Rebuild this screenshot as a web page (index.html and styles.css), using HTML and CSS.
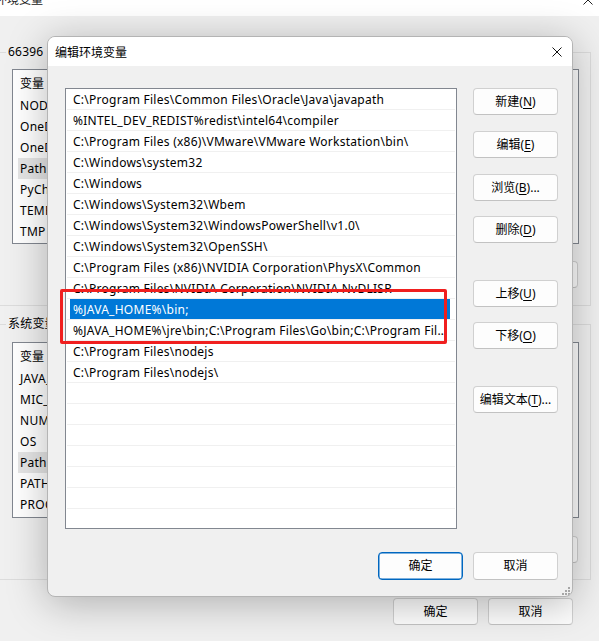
FILE: index.html
```html
<!DOCTYPE html>
<html lang="zh-CN">
<head>
<meta charset="utf-8">
<title>编辑环境变量</title>
<link rel="stylesheet" href="styles.css">
</head>
<body>
<div class="pwin">
  <div class="ptitle">
    <span class="ptext">环境变量</span>
    <svg class="pclose" width="10" height="10" viewBox="0 0 10 10"><path d="M0.5 0.5L9.5 9.5M9.5 0.5L0.5 9.5" stroke="#222" stroke-width="1" fill="none"/></svg>
  </div>
  <fieldset class="grp grp-user">
    <legend>66396 的用户变量(<u>U</u>)</legend>
    <div class="plist">
      <div class="phead"><span class="pc1">变量</span><span class="pc2">值</span></div>
      <div class="prow"><span class="pcell">NODE_PATH</span></div>
      <div class="prow"><span class="pcell">OneDrive</span></div>
      <div class="prow"><span class="pcell">OneDriveConsumer</span></div>
      <div class="prow sel"><span class="pcell">Path</span></div>
      <div class="prow"><span class="pcell">PyCharm</span></div>
      <div class="prow"><span class="pcell">TEMP</span></div>
      <div class="prow"><span class="pcell">TMP</span></div>
    </div>
    <div class="pbtns">
      <button class="btn">新建(<u>N</u>)...</button>
      <button class="btn">编辑(<u>E</u>)...</button>
      <button class="btn">删除(<u>D</u>)</button>
    </div>
  </fieldset>
  <fieldset class="grp grp-sys">
    <legend>系统变量(<u>S</u>)</legend>
    <div class="plist plist2">
      <div class="phead"><span class="pc1">变量</span><span class="pc2">值</span></div>
      <div class="prow"><span class="pcell">JAVA_HOME</span></div>
      <div class="prow"><span class="pcell">MIC_LD_LIBRARY_PATH</span></div>
      <div class="prow"><span class="pcell">NUMBER_OF_PROCESSORS</span></div>
      <div class="prow"><span class="pcell">OS</span></div>
      <div class="prow sel"><span class="pcell">Path</span></div>
      <div class="prow"><span class="pcell">PATHEXT</span></div>
      <div class="prow"><span class="pcell">PROCESSOR_ARCHITECTURE</span></div>
    </div>
    <div class="pbtns pbtns2">
      <button class="btn">新建(<u>W</u>)...</button>
      <button class="btn">编辑(<u>I</u>)...</button>
      <button class="btn">删除(<u>L</u>)</button>
    </div>
  </fieldset>
  <div class="pfoot">
    <button class="btn">确定</button>
    <button class="btn">取消</button>
  </div>
</div>

<div class="dialog">
  <div class="dtitle">
    <span>编辑环境变量</span>
    <svg width="10" height="10" viewBox="0 0 10 10"><path d="M0.5 0.5L9.5 9.5M9.5 0.5L0.5 9.5" stroke="#111" stroke-width="1" fill="none"/></svg>
  </div>
  <div class="dbody">
    <div class="dmain">
      <div class="dlist">
        <div class="drow"><span class="dcell">C:\Program Files\Common Files\Oracle\Java\javapath</span></div>
        <div class="drow"><span class="dcell">%INTEL_DEV_REDIST%redist\intel64\compiler</span></div>
        <div class="drow"><span class="dcell">C:\Program Files (x86)\VMware\VMware Workstation\bin\</span></div>
        <div class="drow"><span class="dcell">C:\Windows\system32</span></div>
        <div class="drow"><span class="dcell">C:\Windows</span></div>
        <div class="drow"><span class="dcell">C:\Windows\System32\Wbem</span></div>
        <div class="drow"><span class="dcell">C:\Windows\System32\WindowsPowerShell\v1.0\</span></div>
        <div class="drow"><span class="dcell">C:\Windows\System32\OpenSSH\</span></div>
        <div class="drow"><span class="dcell">C:\Program Files (x86)\NVIDIA Corporation\PhysX\Common</span></div>
        <div class="drow"><span class="dcell">C:\Program Files\NVIDIA Corporation\NVIDIA NvDLISR</span></div>
        <div class="drow sel"><span class="dcell">%JAVA_HOME%\bin;</span></div>
        <div class="drow"><span class="dcell">%JAVA_HOME%\jre\bin;C:\Program Files\Go\bin;C:\Program Files\Git\cmd</span></div>
        <div class="drow"><span class="dcell">C:\Program Files\nodejs</span></div>
        <div class="drow"><span class="dcell">C:\Program Files\nodejs\</span></div>
        <div class="drow"><span class="dcell"></span></div>
        <div class="drow"><span class="dcell"></span></div>
        <div class="drow"><span class="dcell"></span></div>
        <div class="drow"><span class="dcell"></span></div>
        <div class="drow"><span class="dcell"></span></div>
        <div class="drow"><span class="dcell"></span></div>
        <div class="drow"><span class="dcell"></span></div>
      </div>
      <div class="dbtns">
        <button class="btn">新建(<u>N</u>)</button>
        <button class="btn g16">编辑(<u>E</u>)</button>
        <button class="btn g16">浏览(<u>B</u>)...</button>
        <button class="btn g15">删除(<u>D</u>)</button>
        <button class="btn g37">上移(<u>U</u>)</button>
        <button class="btn g15">下移(<u>O</u>)</button>
        <button class="btn g37">编辑文本(<u>T</u>)...</button>
      </div>
    </div>
    <div class="dfoot">
      <button class="btn btn-tall btn-default">确定</button>
      <button class="btn btn-tall">取消</button>
    </div>
  </div>
  <svg class="grip" width="8" height="8" viewBox="0 0 8 8">
    <rect x="6" y="0" width="2" height="2" fill="#a6a6a6"/>
    <rect x="3" y="3" width="2" height="2" fill="#a6a6a6"/>
    <rect x="6" y="3" width="2" height="2" fill="#a6a6a6"/>
    <rect x="0" y="6" width="2" height="2" fill="#a6a6a6"/>
    <rect x="3" y="6" width="2" height="2" fill="#a6a6a6"/>
    <rect x="6" y="6" width="2" height="2" fill="#a6a6a6"/>
  </svg>
</div>

<div class="mark"></div>
</body>
</html>
```

FILE: styles.css
```css
* { box-sizing: border-box; }
html, body { margin: 0; padding: 0; }
body {
  width: 599px;
  height: 641px;
  overflow: hidden;
  background: #f0f0f0;
  font-family: "Noto Sans", "Noto Sans CJK SC", sans-serif;
  font-size: 12px;
  color: #000;
  position: relative;
}
u { text-decoration: underline; text-underline-offset: 2px; }

/* ---------- parent window (behind) ---------- */
.pwin { width: 599px; }
.ptitle {
  height: 16px;
  background: #fff;
  overflow: hidden;
  display: flex;
  justify-content: space-between;
  align-items: flex-start;
}
.ptext { margin-top: -9px; margin-left: -5px; line-height: 18px; color: #222; }
.pclose { margin-top: -5px; margin-right: 6px; }

.grp {
  border: 1px solid #dcdcdc;
  margin: 0 0 0 -2px;
  width: 593px;
  padding: 9px 11px 17px 13px;
  min-width: 0;
}
.grp legend {
  padding: 0 2px;
  margin-left: -6px;
  line-height: 16px;
  font-size: 12px;
  letter-spacing: 0.2px;
}
.grp-user { margin-top: 28px; }
.grp-sys { margin-top: 10px; padding-top: 10px; padding-bottom: 16px; }

.plist {
  height: 175px;
  border: 1px solid #828790;
  background: #fff;
  overflow: hidden;
}
.plist2 { height: 176px; }
.phead {
  height: 25px;
  display: flex;
  align-items: center;
  padding-left: 7px;
}
.pc1 { width: 160px; }
.prow { height: 21px; display: flex; align-items: center; }
.pcell {
  margin-left: 5px;
  padding-left: 2px;
  width: 160px;
  height: 21px;
  line-height: 21px;
  letter-spacing: 0.26px;
}
.prow.sel .pcell { background: #e5e5e5; }

.pbtns {
  display: flex;
  justify-content: flex-end;
  gap: 10px;
  margin-top: 17px;
  margin-right: 1px;
}
.pbtns2 { margin-top: 18px; }
.pfoot {
  display: flex;
  justify-content: flex-end;
  gap: 10px;
  margin-top: 18px;
  padding-right: 26px;
}

/* ---------- buttons ---------- */
.btn {
  width: 85px;
  height: 27px;
  padding: 0;
  background: #fdfdfd;
  border: 1px solid #d0d0d0;
  border-bottom-color: #c2c2c2;
  border-radius: 4px;
  font-family: inherit;
  font-size: 12px;
  color: #000;
  line-height: 1;
  display: flex;
  align-items: center;
  justify-content: center;
  white-space: nowrap;
}
.btn-tall { height: 28px; }
.btn-default { border: 1px solid #0067c0; box-shadow: inset 0 0 0 0.5px #0067c0; }

/* ---------- dialog ---------- */
.dialog {
  position: absolute;
  left: 47px;
  top: 36px;
  width: 526px;
  height: 561px;
  border: 1px solid #b4b4b4;
  border-radius: 8px;
  background: #f0f0f0;
  box-shadow: 0 6px 40px rgba(0, 0, 0, 0.28);
  overflow: hidden;
  display: flex;
  flex-direction: column;
}
.dtitle {
  height: 29px;
  flex: none;
  background: #fff;
  display: flex;
  align-items: center;
  justify-content: space-between;
  padding: 0 10px 0 7px;
}
.dbody {
  padding: 22px 14px 0 17px;
  display: flex;
  flex-direction: column;
}
.dmain { display: flex; align-items: flex-start; }
.dlist {
  width: 392px;
  height: 441px;
  border: 1px solid #828790;
  background: #fff;
  overflow: hidden;
  flex: none;
}
.drow {
  height: 21px;
  margin: 0 1px;
  border-bottom: 1px solid #f0f0f0;
  display: flex;
}
.dcell {
  margin-left: 3px;
  padding-left: 3px;
  width: 380px;
  height: 20px;
  line-height: 21px;
  white-space: nowrap;
  overflow: hidden;
  text-overflow: ellipsis;
  letter-spacing: 0.26px;
}
.drow.sel .dcell { background: #0078d7; color: #fff; }

.dbtns { margin-left: 16px; display: flex; flex-direction: column; }
.g15 { margin-top: 15px; }
.g16 { margin-top: 16px; }
.g37 { margin-top: 37px; }

.dfoot {
  display: flex;
  justify-content: flex-end;
  gap: 10px;
  margin-top: 23px;
}
.grip { position: absolute; right: 2px; bottom: 1px; }

/* ---------- annotation ---------- */
.mark {
  position: absolute;
  left: 60px;
  top: 289px;
  width: 387px;
  height: 55px;
  border: 3px solid #f01f1f;
  border-radius: 2px;
}
```
